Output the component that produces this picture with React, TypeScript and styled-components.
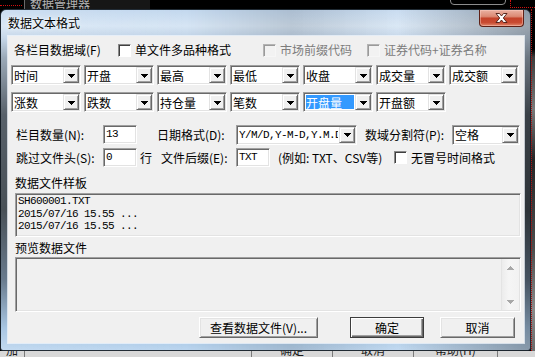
import styled, { createGlobalStyle } from "styled-components";

const GlobalStyle = createGlobalStyle`
  html, body {
    margin: 0;
    padding: 0;
    background: #000;
  }
  body {
    font-family: "Noto Sans CJK SC", "Liberation Sans", sans-serif;
    font-size: 12px;
    color: #000;
  }
`;

const mono = `"Liberation Mono", "Noto Sans CJK SC", monospace`;

const Desktop = styled.div`
  width: 535px;
  height: 357px;
  overflow: hidden;
  background: #000;
  display: flex;
  flex-direction: column;
`;

// bits of the main program window peeking out behind the dialog
const BackTop = styled.div`
  height: 9px;
  flex: none;
  display: flex;
  overflow: hidden;
`;

const RedDots = styled.span<{ $w: number }>`
  flex: none;
  width: ${(p) => p.$w}px;
  height: 3px;
  margin-top: 5px;
  border-top: 1px dotted #d01010;
`;

const BackTitle = styled.span`
  flex: none;
  width: 120px;
  height: 14px;
  margin: -3px 0 0 2px;
  padding-left: 5px;
  border-left: 1px solid #6a6a6a;
  background: #161616;
  color: #b4b4b4;
  line-height: 14px;
`;

const BackBtnEdge = styled.span`
  flex: none;
  width: 54px;
  height: 10px;
  margin: -7px 0 0 auto;
  border: 1px solid #8c8c8c;
  border-radius: 4px;
`;

const RedCorner = styled.span`
  flex: none;
  width: 24px;
  height: 7px;
  margin-left: 4px;
  border-left: 1px dotted #d01010;
  border-bottom: 1px dotted #d01010;
`;

const Middle = styled.div`
  height: 342px;
  flex: none;
  display: flex;
`;

const RightStrip = styled.div`
  flex: 1;
  background: linear-gradient(
    180deg,
    #000 0,
    #000 40px,
    #3c3c3c 48px,
    #7a7a7a 100px,
    #262626 150px,
    #4c4c4c 240px,
    #8a8a8a 300px,
    #6a6a6a 342px
  );
  border-left: 1px dotted #b01010;
`;

const BackBottom = styled.div`
  height: 6px;
  flex: none;
  display: flex;
  overflow: hidden;
  background: #d8d8d8;
`;

const BackCell = styled.div<{ $w: number }>`
  flex: none;
  width: ${(p) => p.$w}px;
  display: flex;
  justify-content: center;
  border-right: 1px solid #7a7a7a;
`;

const BackLabel = styled.span`
  margin-top: -7px;
  line-height: 12px;
  color: #1a1a1a;
`;

// the dialog itself
const Window = styled.div`
  width: 531px;
  height: 342px;
  flex: none;
  box-sizing: border-box;
  display: flex;
  flex-direction: column;
  padding: 0 6px 7px 7px;
  border: 1px solid rgba(16, 24, 32, 0.9);
  border-radius: 6px 6px 3px 3px;
  background: linear-gradient(90deg, rgba(255, 255, 255, 0.12), rgba(255, 255, 255, 0) 35%, rgba(0, 0, 0, 0.12) 55%, rgba(255, 255, 255, 0.1) 75%, rgba(40, 40, 40, 0.35)),
    linear-gradient(
      180deg,
      #c3d8ee 0,
      #d6e5f4 16px,
      #bfd2e6 28px,
      #8d9dad 48px,
      #414b55 105px,
      #303940 200px,
      #55697e 270px,
      #9dbede 318px,
      #bdd7f0 342px
    );
`;

const TitleBar = styled.div`
  height: 26px;
  flex: none;
  display: flex;
  align-items: flex-start;
`;

const Title = styled.span`
  margin-top: 6px;
  line-height: 14px;
  font-size: 12px;
  color: #000;
  text-shadow: 0 0 5px rgba(255, 255, 255, 0.95), 0 0 2px rgba(255, 255, 255, 0.9);
`;

const CloseBtn = styled.span`
  margin-left: auto;
  width: 45px;
  height: 17px;
  box-sizing: border-box;
  display: flex;
  align-items: center;
  justify-content: center;
  border: 1px solid #5e2016;
  border-top: none;
  border-radius: 0 0 4px 4px;
  background: linear-gradient(180deg, #eab1a2 0%, #dc8a75 40%, #c4432b 52%, #c84a31 78%, #e2876b 100%);
  box-shadow: inset 0 0 0 1px rgba(255, 210, 200, 0.45);
`;

const Client = styled.div`
  flex: 1;
  display: flex;
  flex-direction: column;
  box-sizing: border-box;
  padding-top: 7px;
  background: #f0f0f0;
  box-shadow: 0 0 0 1px rgba(240, 246, 252, 0.75);
`;

const Row = styled.div<{ $mt: number; $pl: number; $h: number }>`
  display: flex;
  align-items: center;
  height: ${(p) => p.$h}px;
  margin-top: ${(p) => p.$mt}px;
  padding-left: ${(p) => p.$pl}px;
`;

const Text = styled.span<{ $w?: number; $ml?: number; $dim?: boolean }>`
  flex: none;
  width: ${(p) => (p.$w ? `${p.$w}px` : "auto")};
  margin-left: ${(p) => p.$ml ?? 0}px;
  color: ${(p) => (p.$dim ? "#7c7c7c" : "#000")};
  line-height: 14px;
  white-space: nowrap;
`;

const CheckItem = styled.span<{ $w?: number }>`
  flex: none;
  width: ${(p) => (p.$w ? `${p.$w}px` : "auto")};
  display: flex;
  align-items: center;
`;

const Box = styled.span<{ $disabled?: boolean }>`
  flex: none;
  width: 13px;
  height: 13px;
  box-sizing: border-box;
  margin-right: 4px;
  border: 1px solid;
  border-color: ${(p) => (p.$disabled ? "#b4b4b4 #f6f6f6 #f6f6f6 #b4b4b4" : "#8a8a8a #fff #fff #8a8a8a")};
  box-shadow: inset 1px 1px ${(p) => (p.$disabled ? "#9a9a9a" : "#404040")};
  background: ${(p) => (p.$disabled ? "#f2f2f2" : "#fff")};
`;

const ComboGrid = styled.div`
  display: grid;
  grid-template-columns: repeat(7, 70px);
  grid-auto-rows: 20px;
  column-gap: 3px;
  row-gap: 7px;
  margin-top: 8px;
  padding-left: 3px;
`;

const Combo = styled.div<{ $w?: number }>`
  flex: none;
  width: ${(p) => p.$w ?? 70}px;
  height: 20px;
  box-sizing: border-box;
  display: flex;
  padding: 1px;
  background: #fff;
  border: 1px solid;
  border-color: #a0a0a0 #fff #fff #a0a0a0;
  box-shadow: inset 1px 1px #696969, inset -1px -1px #e3e3e3;
`;

const ComboValue = styled.span<{ $selected?: boolean; $mono?: boolean }>`
  flex: 1;
  min-width: 0;
  display: flex;
  align-items: center;
  white-space: nowrap;
  margin: 1px;
  background: ${(p) => (p.$selected ? "#3399ff" : "transparent")};
  color: ${(p) => (p.$selected ? "#fff" : "#000")};
  font-family: ${(p) => (p.$mono ? mono : "inherit")};
  font-size: ${(p) => (p.$mono ? 11 : 12)}px;
  letter-spacing: ${(p) => (p.$mono ? "-0.6px" : "0")};
  overflow-x: ${(p) => (p.$mono ? "clip" : "visible")};
`;

const DropBtn = styled.span`
  flex: none;
  width: 16px;
  height: 16px;
  box-sizing: border-box;
  display: flex;
  align-items: center;
  justify-content: center;
  background: #f0f0f0;
  border: 1px solid;
  border-color: #e3e3e3 #696969 #696969 #e3e3e3;
  box-shadow: inset 1px 1px #fff, inset -1px -1px #a0a0a0;
`;

const Field = styled.span<{ $w: number }>`
  flex: none;
  width: ${(p) => p.$w}px;
  height: 19px;
  box-sizing: border-box;
  padding: 1px 2px;
  background: #fff;
  border: 1px solid;
  border-color: #a0a0a0 #fff #fff #a0a0a0;
  box-shadow: inset 1px 1px #696969, inset -1px -1px #e3e3e3;
  font-family: ${mono};
  font-size: 11px;
  letter-spacing: -0.6px;
  line-height: 15px;
`;

const Caption = styled.div<{ $mt: number }>`
  height: 14px;
  line-height: 14px;
  margin-top: ${(p) => p.$mt}px;
  padding-left: 7px;
`;

const ReadBox = styled.div<{ $h: number; $mt: number }>`
  width: 506px;
  height: ${(p) => p.$h}px;
  margin: ${(p) => p.$mt}px 0 0 7px;
  box-sizing: border-box;
  display: flex;
  padding: 1px;
  background: #f0f0f0;
  border: 1px solid;
  border-color: #a0a0a0 #fff #fff #a0a0a0;
  box-shadow: inset 1px 1px #696969, inset -1px -1px #e3e3e3;
`;

const SampleText = styled.pre`
  margin: 0;
  padding: 0 0 0 1px;
  font-family: ${mono};
  font-size: 11px;
  letter-spacing: -0.6px;
  line-height: 12.5px;
`;

const ScrollBar = styled.div`
  margin-left: auto;
  width: 17px;
  display: flex;
  flex-direction: column;
  justify-content: space-between;
  border-left: 1px solid #e4e4e4;
  background: linear-gradient(90deg, #ececec, #f5f5f5 40%, #f2f2f2);
`;

const ScrollArrow = styled.span`
  height: 17px;
  display: flex;
  align-items: center;
  justify-content: center;
`;

const ButtonRow = styled.div`
  display: flex;
  justify-content: flex-end;
  margin-top: 5px;
  padding-right: 9px;
`;

const Button = styled.button<{ $w: number; $ml?: number; $default?: boolean }>`
  width: ${(p) => p.$w}px;
  height: 21px;
  margin: 0 0 0 ${(p) => p.$ml ?? 0}px;
  padding: 0;
  font-family: inherit;
  font-size: 12px;
  line-height: 14px;
  color: #000;
  background: #f0f0f0;
  border: 1px solid;
  border-color: ${(p) => (p.$default ? "#3c3c3c" : "#fff #696969 #696969 #fff")};
  box-shadow: ${(p) =>
    p.$default
      ? "inset 1px 1px #fff, inset -1px -1px #696969, inset -2px -2px #a0a0a0"
      : "inset 1px 1px #e3e3e3, inset -1px -1px #a0a0a0"};
`;

function Arrow({ up, color }: { up?: boolean; color: string }) {
  return (
    <svg width="7" height="4" viewBox="0 0 7 4" shapeRendering="crispEdges" style={{ marginTop: up ? 0 : 1 }}>
      <polygon points={up ? "0,4 7,4 3.5,0" : "0,0 7,0 3.5,4"} fill={color} />
    </svg>
  );
}

function CloseGlyph() {
  return (
    <svg width="13" height="10" viewBox="0 0 13 10">
      <polygon
        points="1,0.5 4.5,0.5 6.5,3 8.5,0.5 12,0.5 8.3,5 12,9.5 8.5,9.5 6.5,7 4.5,9.5 1,9.5 4.7,5"
        fill="#fff"
        stroke="#4a1a12"
        strokeWidth="0.9"
        strokeLinejoin="round"
      />
    </svg>
  );
}

function Select({ value, w, selected, monoText }: { value: string; w?: number; selected?: boolean; monoText?: boolean }) {
  return (
    <Combo $w={w}>
      <ComboValue $selected={selected} $mono={monoText}>
        {value}
      </ComboValue>
      <DropBtn>
        <Arrow color="#000" />
      </DropBtn>
    </Combo>
  );
}

const fieldsRow1 = ["时间", "开盘", "最高", "最低", "收盘", "成交量", "成交额"];
const fieldsRow2 = ["涨数", "跌数", "持仓量", "笔数", "开盘量", "开盘额"];

const sample = "SH600001.TXT\n2015/07/16 15.55 ...\n2015/07/16 15.55 ...";

export default function App() {
  return (
    <Desktop>
      <GlobalStyle />
      <BackTop>
        <RedDots $w={22} />
        <BackTitle>数据管理器</BackTitle>
        <BackBtnEdge />
        <RedCorner />
      </BackTop>

      <Middle>
        <Window>
          <TitleBar>
            <Title>数据文本格式</Title>
            <CloseBtn>
              <CloseGlyph />
            </CloseBtn>
          </TitleBar>

          <Client>
            <Row $mt={0} $pl={6} $h={14}>
              <Text $w={104}>各栏目数据域(F)</Text>
              <CheckItem $w={145}>
                <Box />
                <Text>单文件多品种格式</Text>
              </CheckItem>
              <CheckItem $w={104}>
                <Box $disabled />
                <Text $dim>市场前缀代码</Text>
              </CheckItem>
              <CheckItem>
                <Box $disabled />
                <Text $dim>证券代码+证券名称</Text>
              </CheckItem>
            </Row>

            <ComboGrid>
              {fieldsRow1.map((f) => (
                <Select key={f} value={f} />
              ))}
              {fieldsRow2.map((f) => (
                <Select key={f} value={f} selected={f === "开盘量"} />
              ))}
            </ComboGrid>

            <Row $mt={13} $pl={8} $h={19}>
              <Text $w={87}>栏目数量(N):</Text>
              <Field $w={34}>13</Field>
              <Text $ml={20} $w={79}>
                日期格式(D):
              </Text>
              <Select w={121} value="Y/M/D,Y-M-D,Y.M.D" monoText />
              <Text $ml={8} $w={87}>
                数域分割符(P):
              </Text>
              <Select w={68} value="空格" />
            </Row>

            <Row $mt={4} $pl={8} $h={19}>
              <Text $w={87}>跳过文件头(S):</Text>
              <Field $w={34}>0</Field>
              <Text $ml={3} $w={21}>
                行
              </Text>
              <Text $w={75}>文件后缀(E):</Text>
              <Field $w={34}>TXT</Field>
              <Text $ml={8} $w={116}>
                (例如: TXT、CSV等)
              </Text>
              <CheckItem>
                <Box />
                <Text>无冒号时间格式</Text>
              </CheckItem>
            </Row>

            <Caption $mt={9}>数据文件样板</Caption>
            <ReadBox $h={44} $mt={3}>
              <SampleText>{sample}</SampleText>
            </ReadBox>

            <Caption $mt={4}>预览数据文件</Caption>
            <ReadBox $h={55} $mt={2}>
              <ScrollBar>
                <ScrollArrow>
                  <Arrow up color="#a8a8a8" />
                </ScrollArrow>
                <ScrollArrow>
                  <Arrow color="#a8a8a8" />
                </ScrollArrow>
              </ScrollBar>
            </ReadBox>

            <ButtonRow>
              <Button $w={119}>查看数据文件(V)...</Button>
              <Button $w={74} $ml={32} $default>
                确定
              </Button>
              <Button $w={75} $ml={16}>
                取消
              </Button>
            </ButtonRow>
          </Client>
        </Window>
        <RightStrip />
      </Middle>

      <BackBottom>
        <BackCell $w={24}>
          <BackLabel>加</BackLabel>
        </BackCell>
        <BackCell $w={226} />
        <BackCell $w={80}>
          <BackLabel>确定</BackLabel>
        </BackCell>
        <BackCell $w={80}>
          <BackLabel>取消</BackLabel>
        </BackCell>
        <BackCell $w={83}>
          <BackLabel>帮助(H)</BackLabel>
        </BackCell>
      </BackBottom>
    </Desktop>
  );
}
